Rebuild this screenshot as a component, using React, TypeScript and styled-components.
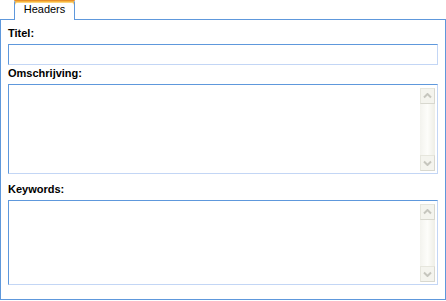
import React from 'react';
import styled, { createGlobalStyle } from 'styled-components';

const GlobalStyle = createGlobalStyle`
  html, body {
    margin: 0;
    padding: 0;
    background: #ffffff;
  }
  body {
    font-family: Tahoma, "Liberation Sans", Arial, sans-serif;
    font-size: 11px;
    color: #000000;
  }
`;

const Page = styled.div`
  width: 446px;
  height: 301px;
  display: flex;
  flex-direction: column;
`;

const TabStrip = styled.div`
  display: flex;
  height: 19px;
  padding-left: 14px;
`;

const Tab = styled.div`
  position: relative;
  z-index: 1;
  box-sizing: border-box;
  width: 61px;
  height: 20px;
  background: #ffffff;
  border: 1px solid #5e98dc;
  border-top: none;
  border-bottom: none;
  border-radius: 3px 3px 0 0;
  box-shadow: inset 0 2px 0 #f7b53f, inset 0 3px 0 #fbd47c;
  display: flex;
  align-items: flex-end;
  justify-content: center;
  padding-bottom: 4px;
  line-height: 13px;
  &::before {
    content: '';
    position: absolute;
    top: 0;
    left: -1px;
    right: -1px;
    height: 1px;
    background: #e68f2a;
    border-radius: 3px 3px 0 0;
  }
`;

const Panel = styled.div`
  box-sizing: border-box;
  width: 446px;
  height: 281px;
  border: 1px solid #5e98dc;
  padding: 0 7px;
  display: flex;
  flex-direction: column;
`;

const Label = styled.div<{ $top: number }>`
  font-weight: bold;
  line-height: 13px;
  height: 13px;
  margin-top: ${({ $top }) => $top}px;
  margin-bottom: 4px;
`;

const Field = styled.div<{ $height: number }>`
  box-sizing: border-box;
  flex: none;
  height: ${({ $height }) => $height}px;
  border-top: 1px solid #5e98dc;
  border-left: 1px solid #5e98dc;
  border-right: 1px solid #c3d6f5;
  border-bottom: 1px solid #c3d6f5;
  background: #ffffff;
  display: flex;
`;

const TextInput = styled.input`
  flex: 1;
  min-width: 0;
  border: none;
  outline: none;
  background: transparent;
  font: inherit;
  padding: 0 2px;
`;

const AreaBody = styled.div`
  flex: 1;
  display: flex;
  padding: 3px 2px 2px 0;
`;

const TextArea = styled.textarea`
  flex: 1;
  border: none;
  outline: none;
  resize: none;
  overflow: hidden;
  background: transparent;
  font: inherit;
  padding: 0 2px;
`;

const ScrollBar = styled.div`
  width: 15px;
  display: flex;
  flex-direction: column;
  background: linear-gradient(to right, #f3f3ee, #fdfdfa 50%, #eeeee6);
`;

const ScrollTrack = styled.div`
  flex: 1;
`;

const ScrollButton = styled.div`
  box-sizing: border-box;
  height: 16px;
  background: #f4f4ee;
  border: 1px solid #e6e6dd;
  border-right-color: #d8d8cf;
  border-bottom-color: #d8d8cf;
  display: flex;
  align-items: center;
  justify-content: center;
`;

const Chevron: React.FC<{ down?: boolean }> = ({ down }) => (
  <svg width="9" height="6" viewBox="0 0 9 6">
    <path
      d={down ? 'M1 1.5 L4.5 5 L8 1.5' : 'M1 4.5 L4.5 1 L8 4.5'}
      stroke="#c6c6be"
      strokeWidth="2"
      fill="none"
    />
  </svg>
);

const Scroller = () => (
  <ScrollBar>
    <ScrollButton>
      <Chevron />
    </ScrollButton>
    <ScrollTrack />
    <ScrollButton>
      <Chevron down />
    </ScrollButton>
  </ScrollBar>
);

const Area: React.FC<{ height: number }> = ({ height }) => (
  <Field $height={height}>
    <AreaBody>
      <TextArea />
      <Scroller />
    </AreaBody>
  </Field>
);

export default function App() {
  return (
    <Page>
      <GlobalStyle />
      <TabStrip>
        <Tab>Headers</Tab>
      </TabStrip>
      <Panel>
        <Label $top={7}>Titel:</Label>
        <Field $height={21}>
          <TextInput />
        </Field>
        <Label $top={2}>Omschrijving:</Label>
        <Area height={90} />
        <Label $top={9}>Keywords:</Label>
        <Area height={85} />
      </Panel>
    </Page>
  );
}
